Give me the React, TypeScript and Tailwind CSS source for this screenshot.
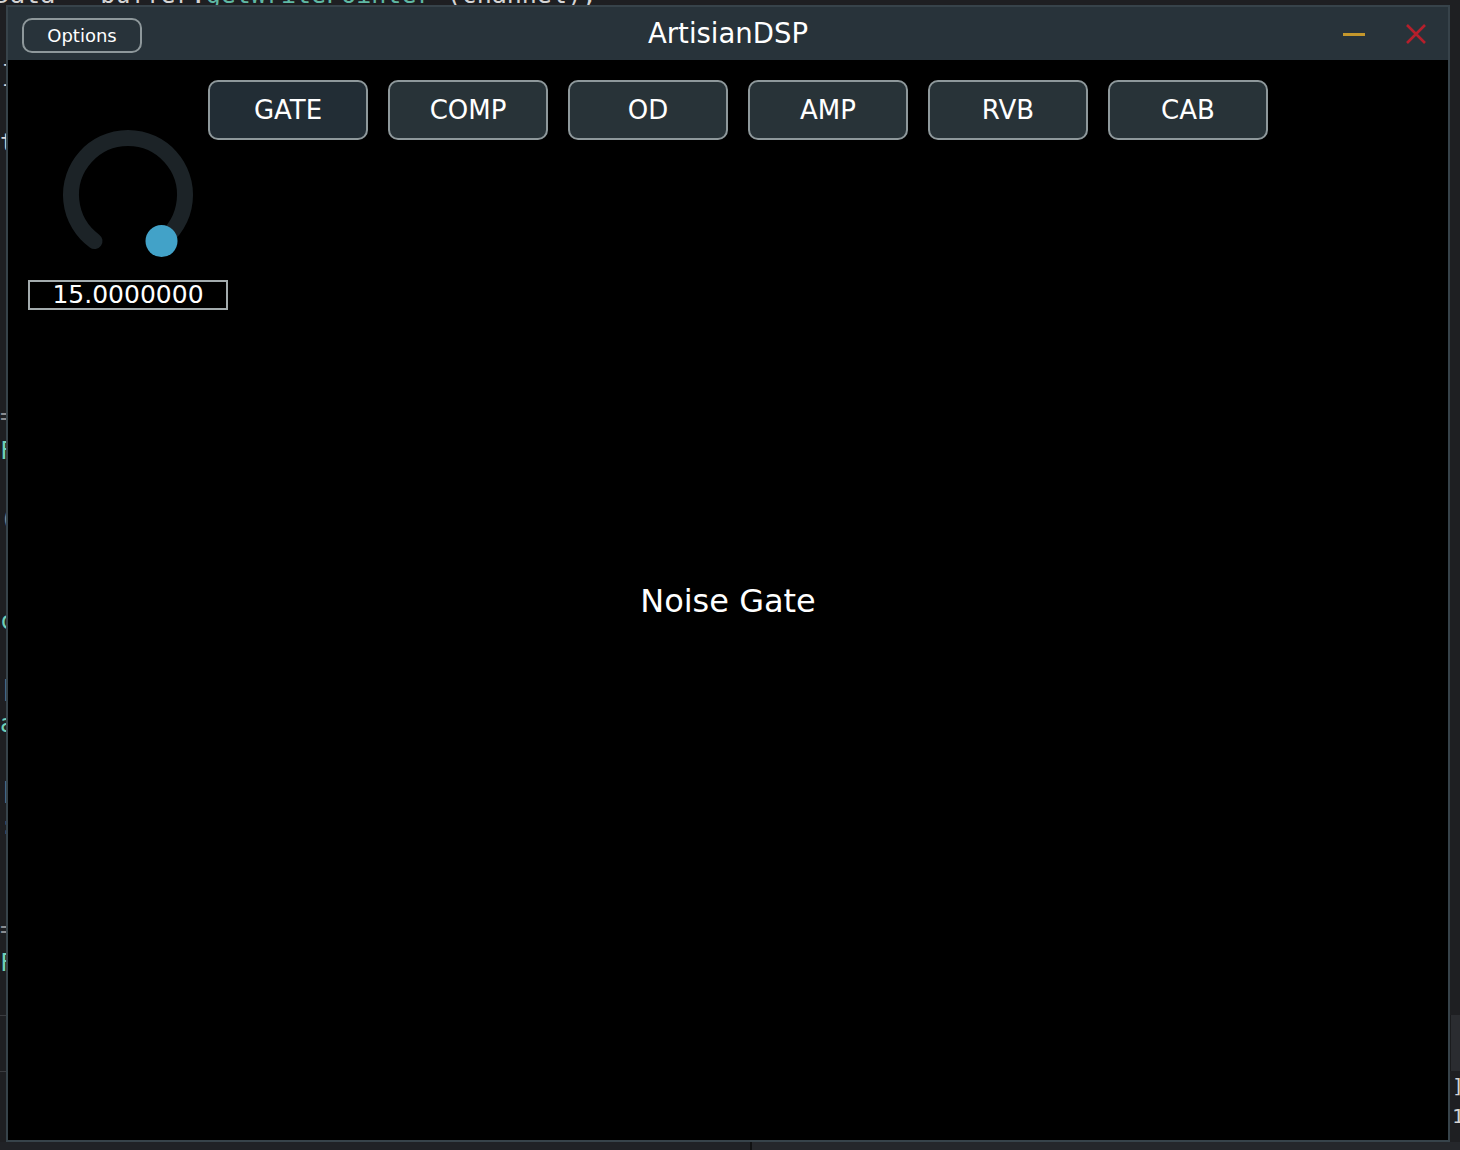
import React from "react";

const modules = ["GATE", "COMP", "OD", "AMP", "RVB", "CAB"];

// fragments of the code editor peeking out on the left of the plugin window
const gutter: { ch: string; color: string }[] = [
  { ch: "]", color: "text-[#d8d8d8]" },
  { ch: "", color: "" },
  { ch: "t", color: "text-[#d8d8d8]" },
  ...Array.from({ length: 7 }, () => ({ ch: "", color: "" })),
  { ch: "=", color: "text-[#8a8c90]" },
  { ch: "F", color: "text-[#6fd0b8]" },
  { ch: "", color: "" },
  { ch: "(", color: "text-[#8a8c90]" },
  { ch: "", color: "" },
  { ch: "", color: "" },
  { ch: "c", color: "text-[#6fd0b8]" },
  { ch: "", color: "" },
  { ch: "[", color: "text-[#8a8c90]" },
  { ch: "a", color: "text-[#6fd0b8]" },
  { ch: "", color: "" },
  { ch: "[", color: "text-[#8a8c90]" },
  { ch: ":", color: "text-[#8a8c90]" },
  { ch: "", color: "" },
  { ch: "", color: "" },
  { ch: "=", color: "text-[#8a8c90]" },
  { ch: "F", color: "text-[#6fd0b8]" },
];

function Knob() {
  return (
    <svg width="200" height="160" viewBox="0 0 200 160" className="block">
      <path
        d="M 66.5 126.1 A 57 57 0 1 1 133.5 126.1"
        fill="none"
        stroke="#1c2327"
        strokeWidth="16"
        strokeLinecap="round"
      />
      <circle cx="133.5" cy="126.1" r="16" fill="#42a2c8" />
    </svg>
  );
}

function TitleBar() {
  return (
    <div className="h-[53px] bg-[#28333a] grid grid-cols-[1fr_auto_1fr] items-start">
      <div className="pl-[14px] pt-[11px]">
        <button className="w-[120px] h-[35px] rounded-[10px] border-2 border-[#8e989b] bg-[#28333a] text-white text-[18px] leading-[31px] flex items-center justify-center">
          Options
        </button>
      </div>
      <div className="text-white text-[27.5px] leading-[53px]">ArtisianDSP</div>
      <div className="flex items-center justify-end h-[53px] pr-[22px]">
        <div className="w-[22px] h-[3px] bg-[#c4972c] mt-[1px]" />
        <svg width="20" height="20" viewBox="0 0 20 20" className="ml-[41px]">
          <path d="M1 1 L19 19 M19 1 L1 19" stroke="#b51f2b" strokeWidth="2.6" />
        </svg>
      </div>
    </div>
  );
}

function Content() {
  return (
    <div className="h-[1080px] bg-black flex flex-col">
      <div className="flex gap-[20px] pl-[200px] pt-[20px]">
        {modules.map((m, i) => (
          <button
            key={m}
            className={
              "w-[160px] h-[60px] rounded-[10px] border-2 border-[#8e989b] text-white text-[26px] flex items-center justify-center " +
              (i === 0 ? "bg-[#222d35]" : "bg-[#283338]")
            }
          >
            {m}
          </button>
        ))}
      </div>

      <div className="ml-[20px] mt-[-25px] w-[200px] flex flex-col">
        <Knob />
        <div className="mt-[5px] h-[30px] border-2 border-[#a3abad] text-white text-[25px] leading-[26px] text-center">
          15.0000000
        </div>
      </div>

      <div className="mt-[271px] text-white text-[32px] leading-[40px] text-center">Noise Gate</div>
    </div>
  );
}

export default function App() {
  return (
    <div className="w-[1460px] h-[1150px] bg-[#1e1f22] flex flex-col overflow-hidden font-['DejaVu_Sans',sans-serif]">
      {/* editor line behind the window top */}
      <div className="h-[5px] shrink-0 overflow-hidden">
        <div className="ml-[-5px] mt-[-18px] whitespace-pre font-['DejaVu_Sans_Mono',monospace] text-[25px] leading-[25px] text-[#d4d4d4]">
          Data = buffer.<span className="text-[#5fb8a4]">getWritePointer</span> (channel);
        </div>
      </div>

      <div className="flex h-[1137px] shrink-0">
        <div className="w-[6px] shrink-0 overflow-hidden flex flex-col pt-[53px] font-['DejaVu_Sans_Mono',monospace] text-[24px]">
          {gutter.map((g, i) => (
            <div key={i} className={"h-[34.15px] leading-[34px] whitespace-pre " + g.color}>
              {g.ch || " "}
            </div>
          ))}
          <div className="mt-[35px] h-px bg-[#3a3c40]" />
          <div className="mt-[55px] h-px bg-[#3a3c40]" />
        </div>

        <div className="w-[1444px] shrink-0 border-2 border-[#37434a] flex flex-col">
          <TitleBar />
          <Content />
        </div>

        <div className="flex-1 min-w-0 overflow-hidden flex flex-col">
          <div className="h-[1010px] bg-[#1e1f22]" />
          <div className="h-[56px] bg-[#2a2c30] border-l border-[#1a1b1d]" />
          <div className="flex-1 bg-[#1e1f22] text-[#d4d4d4] text-[20px] leading-[30px] font-['DejaVu_Sans_Mono',monospace]">
            <div className="pl-[2px]">]</div>
            <div className="pl-[2px]">1</div>
          </div>
        </div>
      </div>

      <div className="flex-1 flex">
        <div className="w-[750px] bg-[#202226]" />
        <div className="w-[2px] bg-[#101112]" />
        <div className="flex-1 bg-[#25272b]" />
      </div>
    </div>
  );
}
